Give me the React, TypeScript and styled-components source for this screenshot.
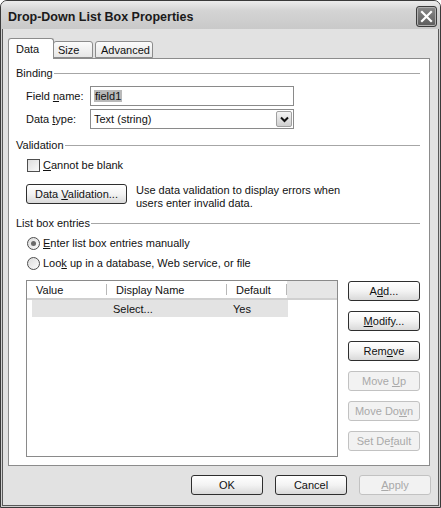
import React from 'react'
import styled, { createGlobalStyle } from 'styled-components'

const Global = createGlobalStyle`
  html, body {
    margin: 0;
    padding: 0;
    background: #fff;
  }
  body {
    font-family: "Liberation Sans", Arial, sans-serif;
    font-size: 11px;
    color: #111;
  }
`

const Window = styled.div`
  width: 441px;
  height: 508px;
  box-sizing: border-box;
  border: 1px solid #3a3a3a;
  border-radius: 7px 7px 0 0;
  background: #cfcfcf;
  display: flex;
  flex-direction: column;
  overflow: hidden;
`

const TitleBar = styled.div`
  height: 28px;
  flex: none;
  display: flex;
  align-items: center;
  padding: 0 3px 0 7px;
  background: linear-gradient(#ececec 0%, #d4d4d4 35%, #c9c9c9 100%);
`

const Title = styled.div`
  flex: 1;
  font-weight: bold;
  font-size: 12.5px;
  color: #1a1a1a;
  padding-top: 3px;
`

const CloseButton = styled.div`
  width: 19px;
  height: 19px;
  border: 1px solid #3c3c3c;
  border-radius: 3px;
  background: linear-gradient(#8a8a8a, #5c5c5c);
  box-shadow: inset 0 0 0 1px #b0b0b0;
  display: flex;
  align-items: center;
  justify-content: center;
  margin-top: 2px;
`

const Body = styled.div`
  flex: 1;
  margin: 0 1px 1px;
  border: 1px solid #595959;
  border-top: none;
  background: #e2e2e2;
  padding: 8px 8px 0 5px;
  display: flex;
  flex-direction: column;
`

const TabStrip = styled.div`
  display: flex;
  align-items: flex-end;
  height: 21px;
  position: relative;
  z-index: 1;
`

const Tab = styled.div<{ $active?: boolean; $w: number; $pad: number; $gap?: number }>`
  width: ${p => p.$w}px;
  height: ${p => (p.$active ? '21px' : '17px')};
  box-sizing: border-box;
  padding: ${p => (p.$active ? 4 : 2)}px 0 0 ${p => p.$pad}px;
  margin-left: ${p => p.$gap ?? 0}px;
  border: 1px solid #8c8c8c;
  border-bottom: ${p => (p.$active ? 'none' : '1px solid #8c8c8c')};
  border-radius: 3px 3px 0 0;
  background: ${p => (p.$active ? '#fff' : 'linear-gradient(#fbfbfb, #e6e6e6)')};
  margin-bottom: ${p => (p.$active ? '-1px' : '0')};
`

const Panel = styled.div`
  height: 408px;
  box-sizing: border-box;
  border: 1px solid #8c8c8c;
  background: #fff;
  padding: 7px 9px 0 7px;
  display: flex;
  flex-direction: column;
`

const GroupHead = styled.div<{ $top?: number }>`
  display: flex;
  align-items: center;
  height: 14px;
  margin-top: ${p => p.$top ?? 0}px;
  &::after {
    content: '';
    flex: 1;
    height: 1px;
    background: #a6a6a6;
    margin-left: 1px;
  }
`

const FieldRow = styled.div<{ $top?: number }>`
  display: flex;
  align-items: center;
  height: 20px;
  margin-top: ${p => p.$top ?? 0}px;
  padding-left: 10px;
`

const FieldLabel = styled.div`
  width: 64px;
`

const TextBox = styled.div`
  width: 204px;
  height: 20px;
  box-sizing: border-box;
  border: 1px solid #8a8a8a;
  display: flex;
  align-items: center;
  padding-left: 3px;
  background: #fff;
`

const Selected = styled.span`
  background: #b9b9b9;
  padding: 0 1px;
`

const DropButton = styled.div`
  margin-left: auto;
  margin-right: 1px;
  width: 16px;
  height: 16px;
  box-sizing: border-box;
  border: 1px solid #a0a0a0;
  border-radius: 2px;
  background: linear-gradient(#f4f4f4, #cfcfcf);
  display: flex;
  align-items: center;
  justify-content: center;
`

const CheckRow = styled.div<{ $top?: number }>`
  display: flex;
  align-items: center;
  height: 14px;
  margin-top: ${p => p.$top ?? 0}px;
  padding-left: 11px;
  gap: 3px;
`

const CheckBox = styled.div`
  width: 13px;
  height: 13px;
  box-sizing: border-box;
  border: 1px solid #4e4e4e;
  background: linear-gradient(135deg, #dedede, #fafafa);
`

const Radio = styled.div<{ $checked?: boolean }>`
  width: 13px;
  height: 13px;
  box-sizing: border-box;
  border: 1px solid #4e4e4e;
  border-radius: 50%;
  background: linear-gradient(135deg, #dcdcdc, #fbfbfb);
  display: flex;
  align-items: center;
  justify-content: center;
  &::after {
    content: '';
    display: ${p => (p.$checked ? 'block' : 'none')};
    width: 5px;
    height: 5px;
    border-radius: 50%;
    background: #6a6a6a;
  }
`

const ValidationRow = styled.div`
  display: flex;
  align-items: flex-start;
  margin-top: 12px;
  padding-left: 10px;
  gap: 9px;
`

const Hint = styled.div`
  line-height: 13px;
`

const Button = styled.div<{ $disabled?: boolean; $width?: number }>`
  width: ${p => p.$width ?? 72}px;
  height: 20px;
  box-sizing: border-box;
  border: 1px solid ${p => (p.$disabled ? '#c2c2c2' : '#2e2e2e')};
  border-radius: 3px;
  background: ${p => (p.$disabled ? '#f2f2f2' : 'linear-gradient(#ffffff 0%, #f3f3f3 50%, #d9d9d9 100%)')};
  color: ${p => (p.$disabled ? '#a9a9a9' : '#111')};
  display: flex;
  align-items: center;
  justify-content: center;
  flex: none;
  white-space: pre;
`

const U = styled.span`
  text-decoration: underline;
`

const ListArea = styled.div`
  display: flex;
  margin-top: 10px;
  padding-left: 10px;
  gap: 10px;
`

const ListBox = styled.div`
  width: 312px;
  height: 177px;
  box-sizing: border-box;
  border: 1px solid #8a8a8a;
  background: #fff;
`

const ListHeader = styled.div`
  display: flex;
  height: 17px;
  border-bottom: 2px solid #d0d0d0;
`

const HeadCell = styled.div<{ $w: number }>`
  width: ${p => p.$w}px;
  padding-left: 9px;
  box-sizing: border-box;
  display: flex;
  align-items: center;
  position: relative;
  &::after {
    content: '';
    position: absolute;
    right: 0;
    top: 3px;
    bottom: 3px;
    width: 1px;
    background: #b8b8b8;
  }
`

const HeadFill = styled.div`
  flex: 1;
  background: #e6e6e6;
`

const ListRow = styled.div`
  display: flex;
  height: 17px;
  margin-left: 5px;
  width: 256px;
  background: #e3e3e3;
`

const Cell = styled.div<{ $w: number }>`
  width: ${p => p.$w}px;
  padding-left: 6px;
  box-sizing: border-box;
  display: flex;
  align-items: center;
`

const SideButtons = styled.div`
  display: flex;
  flex-direction: column;
  gap: 10px;
  padding-top: 1px;
`

const Footer = styled.div`
  display: flex;
  justify-content: flex-end;
  gap: 12px;
  margin-top: 9px;
  margin-right: -1px;
`

export default function App() {
  return (
    <>
      <Global />
      <Window>
        <TitleBar>
          <Title>Drop-Down List Box Properties</Title>
          <CloseButton>
            <svg width="13" height="13" viewBox="0 0 13 13">
              <path d="M2 2 L11 11 M11 2 L2 11" stroke="#fff" strokeWidth="2.2" strokeLinecap="square" />
            </svg>
          </CloseButton>
        </TitleBar>
        <Body>
          <TabStrip>
            <Tab $active $w={46} $pad={7}>Data</Tab>
            <Tab $w={40} $pad={4} $gap={-1}>Size</Tab>
            <Tab $w={58} $pad={5} $gap={2}>Advanced</Tab>
          </TabStrip>
          <Panel>
            <GroupHead>Binding</GroupHead>
            <FieldRow $top={6}>
              <FieldLabel>
                Field <U>n</U>ame:
              </FieldLabel>
              <TextBox>
                <Selected>field1</Selected>
              </TextBox>
            </FieldRow>
            <FieldRow $top={3}>
              <FieldLabel>
                Data <U>t</U>ype:
              </FieldLabel>
              <TextBox>
                <span>Text (string)</span>
                <DropButton>
                  <svg width="9" height="7" viewBox="0 0 9 7">
                    <path d="M1 1.5 L4.5 5 L8 1.5" fill="none" stroke="#111" strokeWidth="2" />
                  </svg>
                </DropButton>
              </TextBox>
            </FieldRow>
            <GroupHead $top={9}>Validation</GroupHead>
            <CheckRow $top={6}>
              <CheckBox />
              <span>
                <U>C</U>annot be blank
              </span>
            </CheckRow>
            <ValidationRow>
              <Button $width={101}>
                <span>
                  Data <U>V</U>alidation...
                </span>
              </Button>
              <Hint>
                Use data validation to display errors when
                <br />
                users enter invalid data.
              </Hint>
            </ValidationRow>
            <GroupHead $top={6}>List box entries</GroupHead>
            <CheckRow $top={6}>
              <Radio $checked />
              <span>
                <U>E</U>nter list box entries manually
              </span>
            </CheckRow>
            <CheckRow $top={6}>
              <Radio />
              <span>
                Loo<U>k</U> up in a database, Web service, or file
              </span>
            </CheckRow>
            <ListArea>
              <ListBox>
                <ListHeader>
                  <HeadCell $w={80}>Value</HeadCell>
                  <HeadCell $w={120}>Display Name</HeadCell>
                  <HeadCell $w={60}>Default</HeadCell>
                  <HeadFill />
                </ListHeader>
                <ListRow>
                  <Cell $w={75} />
                  <Cell $w={120}>Select...</Cell>
                  <Cell $w={60}>Yes</Cell>
                </ListRow>
              </ListBox>
              <SideButtons>
                <Button>
                  <span>
                    A<U>d</U>d...
                  </span>
                </Button>
                <Button>
                  <span>
                    <U>M</U>odify...
                  </span>
                </Button>
                <Button>
                  <span>
                    Rem<U>o</U>ve
                  </span>
                </Button>
                <Button $disabled>
                  <span>
                    Move <U>U</U>p
                  </span>
                </Button>
                <Button $disabled>
                  <span>
                    Move Do<U>w</U>n
                  </span>
                </Button>
                <Button $disabled>
                  <span>
                    Set De<U>f</U>ault
                  </span>
                </Button>
              </SideButtons>
            </ListArea>
          </Panel>
          <Footer>
            <Button>OK</Button>
            <Button>Cancel</Button>
            <Button $disabled>
              <span>
                <U>A</U>pply
              </span>
            </Button>
          </Footer>
        </Body>
      </Window>
    </>
  )
}
